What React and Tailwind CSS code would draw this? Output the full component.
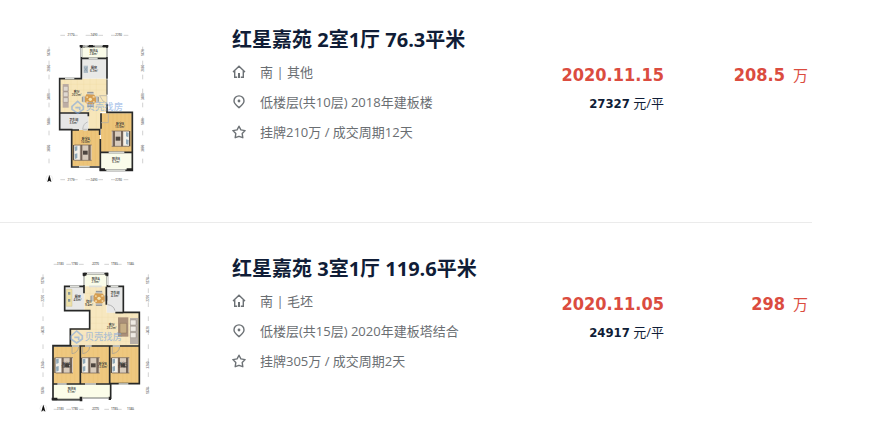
import clsx from "clsx";

const listings = [
  {
    id: 1,
    title: "红星嘉苑 2室1厅 76.3平米",
    facing: "南 | 其他",
    floor: "低楼层(共10层) 2018年建板楼",
    deal: "挂牌210万 / 成交周期12天",
    date: "2020.11.15",
    total: "208.5",
    unit: "27327",
    Plan: TwoRoomPlan,
  },
  {
    id: 2,
    title: "红星嘉苑 3室1厅 119.6平米",
    facing: "南 | 毛坯",
    floor: "低楼层(共15层) 2020年建板塔结合",
    deal: "挂牌305万 / 成交周期2天",
    date: "2020.11.05",
    total: "298",
    unit: "24917",
    Plan: ThreeRoomPlan,
  },
];

function HomeIcon() {
  return (
    <svg className="h-3.5 w-3.5" viewBox="0 0 14 14" fill="none" stroke="#6c7175" strokeWidth="1.4" aria-hidden="true">
      <path d="M1 7 7 1.2 13 7M2.7 6v6.3h2.5M11.3 6v6.3H8.8" />
      <path d="M7 8v5" strokeWidth="2" />
    </svg>
  );
}

function PinIcon() {
  return (
    <svg className="h-3.5 w-3.5" viewBox="0 0 14 14" fill="none" stroke="#6c7175" strokeWidth="1.4" aria-hidden="true">
      <path d="M7 12.6C4.4 10.4 2 8.600 2 5.900a5 5 0 0 1 10 0C12 8.600 9.600 10.400 7 12.600Z" />
      <circle cx="7" cy="6" r="1.4" fill="#6c7175" stroke="none" />
    </svg>
  );
}

function StarIcon() {
  return (
    <svg className="h-3.5 w-3.5" viewBox="0 0 14 14" fill="none" stroke="#6c7175" strokeWidth="1.4" strokeLinejoin="round" aria-hidden="true">
      <path d="m7 1.200 1.900 3.700 4.200.7-2.900 3 .6 4.100L7 11.300l-3.800 1.400.6-4.100-2.900-3 4.200-.7Z" />
    </svg>
  );
}

function Bed({ x, y, flip }) {
  return (
    <g transform={`translate(${x} ${y})${flip ? " translate(56 0) scale(-1 1)" : ""}`}>
      <path d="M0 0h5v46H0z" fill="#5d524a" />
      <path d="M4 0h52v46H4z" fill="#d8cbbc" />
      <path d="M4 2h16v42H4z" fill="#f2f0e9" />
      <path d="m5 5 8-2v13l-7 3zM5 27l8-2v14l-7 3z" fill="#8fa8b8" />
      <path d="M22 0h6v46h-6zM46 0h7v46h-7z" fill="#746459" />
      <path d="M30 17h14v12H30z" fill="#4e4640" />
      <path d="M4 0h52M4 46h52" stroke="#6c5f56" strokeWidth="2" />
    </g>
  );
}

function DiningTable({ x, y }) {
  return (
    <g transform={`translate(${x} ${y})`}>
      <path d="M-10-22h20v9h-20zM-10 13h20v9h-20zM-25-9h10V9h-10zM15-9h10V9H15z" fill="#c3c4c0" />
      <path d="m-12-15 24 1 5 9v14l-8 6H-8l-8-7V-6z" fill="#d59d50" />
      <circle r="5" fill="#f3e5b6" />
      <path d="M-12-9h5v5h-5zM7-10h6v5H7zM-12 6h6v5h-6zM8 5h5v6H8z" fill="#f0d099" />
      <path d="M-9-21H9M-9 21H9M-24-7V7M24-7V7" stroke="#70777b" strokeWidth="2" />
    </g>
  );
}

function RoomLabel({ x, y, name, area }) {
  return (
    <text x={x} y={y} textAnchor="middle" fontSize="9" fontWeight="600" fill="#333">
      {name}
      <tspan x={x} dy="9">{area}</tspan>
    </text>
  );
}

function Compass({ x, y }) {
  return (
    <g transform={`translate(${x} ${y})`}>
      <circle r="10" cy="-1" fill="none" stroke="#ccc" />
      <path d="m0-12 3 9 3 12-6-4-6 4 3-12z" fill="#111" />
    </g>
  );
}

function Brand({ x, y }) {
  return (
    <g transform={`translate(${x} ${y})`} opacity=".6">
      <path d="m-17 1 17-15 17 15v9L0 22l-17-12zM-7 5h13v8" fill="none" stroke="#7da6df" strokeWidth="5" />
      <text x="24" y="13" fontSize="28" fontWeight="500" fill="#7da6df">贝壳找房</text>
    </g>
  );
}

function Dimensions({ ticksX, ticksY, left, right, top, bottom }) {
  return (
    <g fontSize="9" fontWeight="600" fill="#666" stroke="none">
      {[top, bottom].map((row) => (
        <g key={row.y}>
          <path d={`M${row.from} ${row.y}H${row.to}`} stroke="#bbb" strokeWidth="2" strokeDasharray="14 24" />
          {ticksX.map(([x, label]) => (
            <text key={x} x={x} y={row.y + 3} textAnchor="middle">{label}</text>
          ))}
        </g>
      ))}
      {[left, right].map((col) => (
        <g key={col.x}>
          <path d={`M${col.x} ${col.from}V${col.to}`} stroke="#bbb" strokeWidth="2" strokeDasharray="14 28" />
          {ticksY.map(([y, label]) => (
            <text key={y} transform={`translate(${col.x + 3} ${y}) rotate(-90)`} textAnchor="middle">{label}</text>
          ))}
        </g>
      ))}
    </g>
  );
}

function TwoRoomPlan() {
  return (
    <svg className="w-full" viewBox="0 0 390 510" role="img" aria-label="两室一厅户型图">
      <Dimensions
        ticksX={[[123, "2170"], [192, "2490"], [266, "2250"]]}
        ticksY={[[98, "1470"], [145, "2060"], [230, "3480"], [305, "1480"], [385, "3870"]]}
        top={{ y: 46, from: 91, to: 305 }}
        bottom={{ y: 479, from: 91, to: 305 }}
        left={{ x: 57, from: 80, to: 435 }}
        right={{ x: 338, from: 80, to: 446 }}
      />
      <path d="M154 78h77v37h-77z" fill="#fafbe8" />
      <path d="M154 115h77v61h-77z" fill="#e9e9e7" />
      <path d="M91 176h140v100h-20v54h-36v-51H91z" fill="#f7e6ba" />
      <path d="M104 176v100M123 176v100M142 176v100M161 176v100M180 176v100M199 176v150M91 193h139M91 210h139M91 227h139M91 244h139M91 261h118" stroke="#f0daa5" />
      <path d="M88 279h87v51H88z" fill="#e6e6e5" />
      <path d="M124 330h86v108h-86zM213 280h94v117h-94z" fill="#edc57a" />
      <path d="M136 330v107M148 330v107M160 330v107M172 330v107M184 330v107M196 330v107M225 280v117M237 280v117M249 280v117M261 280v117M273 280v117M285 280v117M297 280v117" stroke="#e4b768" />
      <path d="M213 397h94v53h-94z" fill="#fafcea" />
      <path d="M161 137h13v22h-13z" fill="#aebcc6" />
      <path d="m163 142 4 6-4 6m8-13-3 7 3 7" fill="none" stroke="#5e7180" />
      <path d="M98 192h18v71H98z" fill="#bcada4" />
      <path d="M100 199h14v14h-14zM100 216h14v14h-14zM100 233h14v14h-14z" fill="#dfd8d0" stroke="#84746b" />
      <DiningTable x={181} y={238} />
      <Bed x={129} y={375} />
      <Bed x={245} y={333} flip />
      <g fill="none" stroke="#292a2a" strokeWidth="5">
        <path d="M154 79v97H89v153h36v112h85M231 176v-97h-77M231 115h-77M89 279h86v10M124 330h23M174 329h35v16M211 357v94h96V277h-76v-26M213 280v46M213 397h94" />
      </g>
      <path d="M149 75h16v7h-16zM177 75h12v7h-12zM219 75h16v7h-16zM209 445h16v7h-16zM290 445h18v7h-18z" fill="#222" />
      <path d="M158 78h15M194 78h23M154 84v27M231 84v27M105 175h28M160 330h12M147 440h32M229 451h57M236 397h47M176 115h27" stroke="#d6d8d3" strokeWidth="5" />
      <path d="M231 178v46" stroke="#292a2a" strokeWidth="3" />
      <path d="M209 227h22v24q-14-5-22-24M173 306q-13 4-15 22h15M235 280v28h-22" fill="none" stroke="#aaa" strokeWidth="2" />
      <RoomLabel x={191} y={96} name="阳台A" area="2.8m²" />
      <RoomLabel x={192} y={146} name="厨房" area="6.2m²" />
      <RoomLabel x={140} y={220} name="客厅" area="20.2m²" />
      <RoomLabel x={131} y={302} name="卫生间" area="3.5m²" />
      <RoomLabel x={167} y={360} name="卧室A" area="10.0m²" />
      <RoomLabel x={270} y={315} name="卧室B" area="13.5m²" />
      <RoomLabel x={258} y={421} name="阳台B" area="5.2m²" />
      <Brand x={143} y={258} />
      <Compass x={58} y={477} />
    </svg>
  );
}

function ThreeRoomPlan() {
  return (
    <svg className="w-full" viewBox="0 -18 390 510" role="img" aria-label="三室一厅户型图">
      <Dimensions
        ticksX={[[91, "1180"], [134, "1780"], [197, "2770"], [253, "1780"], [301, "1180"]]}
        ticksY={[[77, "1270"], [130, "2270"], [224, "3020"], [330, "3240"], [407, "1370"]]}
        top={{ y: 28, from: 71, to: 322 }}
        bottom={{ y: 463, from: 71, to: 323 }}
        left={{ x: 39, from: 58, to: 435 }}
        right={{ x: 355, from: 58, to: 423 }}
      />
      <path d="M162 57h70v38h-70z" fill="#fafce9" />
      <path d="M105 94h58v71h-58zM231 94h48v79h-48z" fill="#e8e8e7" />
      <path d="M163 94h67v79h99v102H122v-54h58v-56h-17z" fill="#f7e7bf" />
      <path d="M180 97v178M198 97v178M216 97v178M234 173v102M252 173v102M270 173v102M288 173v102M306 173v102M163 115h66M163 133h66M163 151h66M179 187h149M179 205h149M123 223h205M123 241h205M123 259h205" stroke="#efdcae" />
      <path d="M69 275h258v111H69z" fill="#efc87f" />
      <path d="M82 275v110M95 275v110M108 275v110M121 275v110M134 275v110M164 275v110M177 275v110M190 275v110M203 275v110M216 275v110M229 275v110M252 275v110M265 275v110M278 275v110M291 275v110M304 275v110M317 275v110" stroke="#e6bb6e" />
      <path d="M69 387h173v42h-89v5H69z" fill="#fbfde9" />
      <path d="M109 103h17v51h-17z" fill="#ede0a8" stroke="#bdaf77" />
      <path d="M114 111h7v8h-7zM114 132h7v8h-7z" fill="#88969a" />
      <DiningTable x={207} y={130} />
      <path d="M264 187h31v58h-31z" fill="#a98f79" />
      <path d="M270 205h20v29h-20z" fill="#c7ae85" stroke="#6f5c4b" />
      <path d="M300 189h24v78h-24z" fill="#b9b0a8" />
      <path d="M301 195h17v15h-17zM301 214h17v15h-17zM301 233h17v15h-17z" fill="#eee9e3" stroke="#756b63" />
      <Bed x={73} y={308} />
      <Bed x={153} y={308} />
      <Bed x={242} y={308} />
      <path d="M162 56h70v38h48v78h48v214h-86v46M162 57v37h-58v73h75v55h-58v50H69v162h84v-7M229 95v54M162 94v21M69 273h259M151 275v112M239 275v112M69 387h173M256 173h24" fill="none" stroke="#272827" strokeWidth="5" />
      <path d="M158 53h11v9h-11zM226 53h9v9h-9zM65 428h17v8H65zM149 425h8v14h-8zM236 425h7v10h-7z" fill="#222" />
      <path d="M171 56h52M162 64v26M232 64v26M177 94h38M120 94h28M242 94h23M126 273h22M165 273h20M248 273h22M82 387h28M165 387h33M266 387h29" stroke="#dedfda" strokeWidth="5" />
      <path d="M83 435h66M158 429h78" stroke="#6f7370" strokeWidth="3" />
      <path d="M126 276v20q17-2 20-20M158 276v20q19-3 21-20M247 276v20q20-3 22-20M233 149q18 2 22 18" fill="none" stroke="#999" strokeWidth="2" />
      <RoomLabel x={197} y={75} name="阳台A" area="2.9m²" />
      <RoomLabel x={143} y={129} name="厨房" area="4.6m²" />
      <RoomLabel x={255} y={117} name="卫生间" area="4.3m²" />
      <RoomLabel x={177} y={145} name="餐厅" area="9.4m²" />
      <RoomLabel x={245} y={214} name="客厅" area="23.2m²" />
      <RoomLabel x={109} y={329} name="卧室A" area="10.1m²" />
      <RoomLabel x={218} y={329} name="卧室B" area="12.6m²" />
      <RoomLabel x={279} y={329} name="卧室C" area="11.1m²" />
      <RoomLabel x={125} y={406} name="阳台B" area="9.1m²" />
      <Brand x={140} y={242} />
      <Compass x={40} y={461} />
    </svg>
  );
}

function Detail({ icon, children }) {
  return (
    <li className="flex items-center gap-3.5">
      <span className="shrink-0">{icon}</span>
      <span className="whitespace-nowrap">{children}</span>
    </li>
  );
}

function ListingRow({ listing, last }) {
  const { title, facing, floor, deal, date, total, unit, Plan } = listing;

  return (
    <li className={clsx("flex items-start pt-5 pr-1 pb-8", !last && "border-b border-[#ebebeb]")}>
      <div className="ml-[30px] w-[130px] shrink-0">
        <Plan />
      </div>

      <div className="mt-[3px] ml-18 min-w-0 flex-1">
        <h2 className="whitespace-nowrap text-[20px] leading-[34px] font-bold text-[#101d37]">
          {title}
        </h2>
        <ul className="text-[13px] leading-[30px] text-[#6a6e72]">
          <Detail icon={<HomeIcon />}>{facing}</Detail>
          <Detail icon={<PinIcon />}>{floor}</Detail>
          <Detail icon={<StarIcon />}>{deal}</Detail>
        </ul>
      </div>

      <div className="mt-10 text-right text-[13px] text-[#101d37]">
        <p className="font-['DejaVu_Sans_Condensed','DejaVu_Sans',sans-serif] text-[18px] leading-[30px] font-bold text-[#db4c3f]">
          {date}
        </p>
        <p className="leading-[26px]">
          <strong className="font-['DejaVu_Sans_Condensed','DejaVu_Sans',sans-serif]">{unit}</strong>{" "}
          元/平
        </p>
      </div>

      <p className="mt-10 flex w-36 items-baseline justify-end gap-2 leading-[30px] text-[#db4c3f]">
        <strong className="font-['DejaVu_Sans_Condensed','DejaVu_Sans',sans-serif] text-[18px]">{total}</strong>
        <span className="text-[15px]">万</span>
      </p>
    </li>
  );
}

export default function App() {
  return (
    <main className="bg-white pr-[67px] font-['Open_Sans','Noto_Sans_CJK_SC',sans-serif]">
      <ul className="flex flex-col gap-1.5">
        {listings.map((listing, i) => (
          <ListingRow key={listing.id} listing={listing} last={i === listings.length - 1} />
        ))}
      </ul>
    </main>
  );
}
